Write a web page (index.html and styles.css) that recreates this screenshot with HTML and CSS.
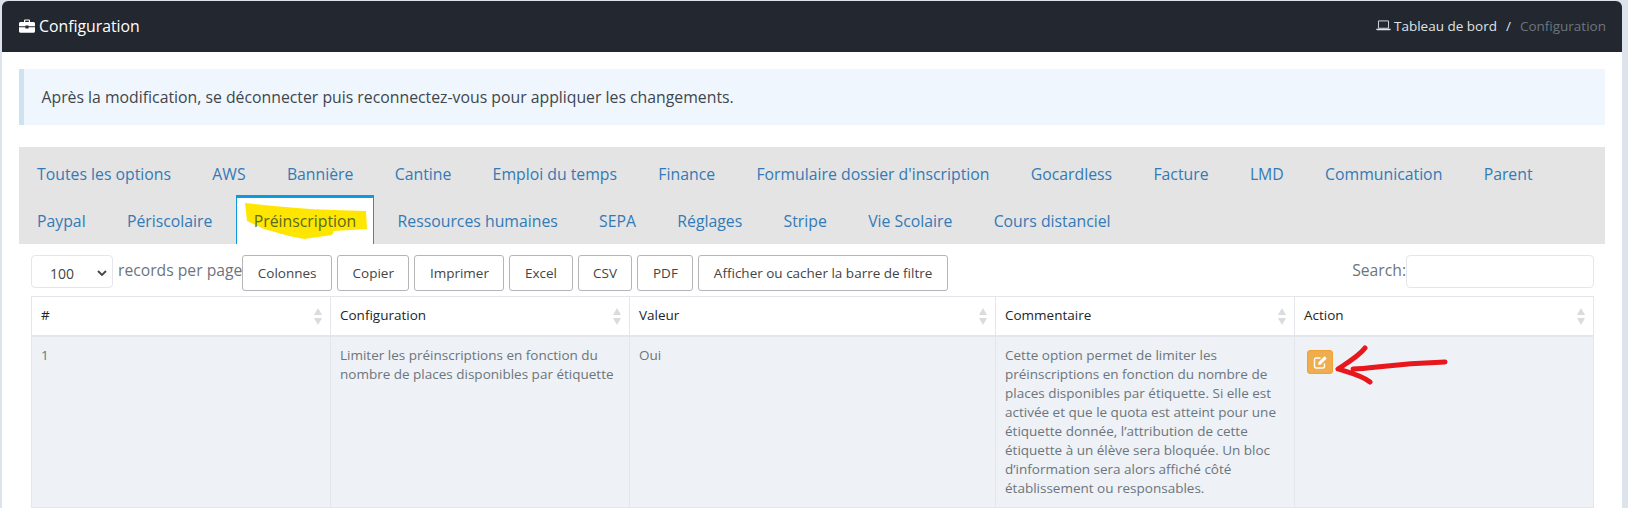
FILE: index.html
```html
<!DOCTYPE html>
<html lang="fr">
<head>
<meta charset="utf-8">
<title>Configuration</title>
<link rel="stylesheet" href="styles.css">
</head>
<body>
<div class="card">
  <header class="topbar">
    <h1 class="title">
      <svg class="ico-brief" viewBox="0 0 16 14"><path fill="#fff" d="M5 3V1.600C5 .9 5.600.4 6.200.4h3.600c.6 0 1.200.5 1.200 1.200V3h3.400c.9 0 1.600.7 1.600 1.500V7.300H9.600V6.600H6.400v.7H0V4.500C0 3.700.7 3 1.600 3H5zm1.200 0h3.600V1.600H6.200V3zM0 8.200h6.400v1.200h3.200V8.200H16v4c0 .9-.7 1.500-1.600 1.500H1.600C.7 13.700 0 13.100 0 12.200v-4z"/></svg>
      Configuration
    </h1>
    <nav class="crumbs">
      <svg class="ico-laptop" viewBox="0 0 16 12"><path fill="none" stroke="#dfe3e8" stroke-width="1" d="M2.500 1h11v8h-11z"/><path fill="#dfe3e8" d="M0 9.500h16v.8l-1 1H1l-1-1z"/></svg>
      <a class="crumb-link">Tableau de bord</a>
      <span class="crumb-sep">/</span>
      <span class="crumb-cur">Configuration</span>
    </nav>
  </header>
  <main class="content">
    <div class="alert">Après la modification, se déconnecter puis reconnectez-vous pour appliquer les changements.</div>
    <section class="panel">
      <div class="tabs">
        <ul class="tab-row tab-row-first">
          <li class="tab">Toutes les options</li>
          <li class="tab">AWS</li>
          <li class="tab">Bannière</li>
          <li class="tab">Cantine</li>
          <li class="tab">Emploi du temps</li>
          <li class="tab">Finance</li>
          <li class="tab">Formulaire dossier d'inscription</li>
          <li class="tab">Gocardless</li>
          <li class="tab">Facture</li>
          <li class="tab">LMD</li>
          <li class="tab">Communication</li>
          <li class="tab">Parent</li>
        </ul>
        <ul class="tab-row tab-row-second">
          <li class="tab">Paypal</li>
          <li class="tab">Périscolaire</li>
          <li class="tab tab-active">
            <svg class="marker" viewBox="0 0 124 36" preserveAspectRatio="none"><path fill="#ffe600" d="M1 0 C30 3 60 6 90 7 L122 8 L123 26 L90 28 L88 32 L60 36 L45 33 L20 26 L3 18 Z"/></svg>
            <span class="tab-label">Préinscription</span>
          </li>
          <li class="tab">Ressources humaines</li>
          <li class="tab">SEPA</li>
          <li class="tab">Réglages</li>
          <li class="tab">Stripe</li>
          <li class="tab">Vie Scolaire</li>
          <li class="tab">Cours distanciel</li>
        </ul>
      </div>
      <div class="tab-body">
        <div class="toolbar">
          <div class="select-box">100<svg class="chev" viewBox="0 0 10 6"><path fill="none" stroke="#444" stroke-width="1.800" d="M1 1l4 4 4-4"/></svg></div>
          <span class="per-page">records per page</span>
          <div class="btns">
            <button class="btn">Colonnes</button>
            <button class="btn">Copier</button>
            <button class="btn">Imprimer</button>
            <button class="btn">Excel</button>
            <button class="btn">CSV</button>
            <button class="btn">PDF</button>
            <button class="btn">Afficher ou cacher la barre de filtre</button>
          </div>
          <label class="search">Search:<span class="search-input"></span></label>
        </div>
        <table class="grid">
          <colgroup><col class="c1"><col class="c2"><col class="c3"><col class="c4"><col class="c5"></colgroup>
          <thead>
            <tr>
              <th>#<span class="sort"></span></th>
              <th>Configuration<span class="sort"></span></th>
              <th>Valeur<span class="sort"></span></th>
              <th>Commentaire<span class="sort"></span></th>
              <th>Action<span class="sort"></span></th>
            </tr>
          </thead>
          <tbody>
            <tr>
              <td>1</td>
              <td>Limiter les préinscriptions en fonction du nombre de places disponibles par étiquette</td>
              <td>Oui</td>
              <td>Cette option permet de limiter les préinscriptions en fonction du nombre de places disponibles par étiquette. Si elle est activée et que le quota est atteint pour une étiquette donnée, l’attribution de cette étiquette à un élève sera bloquée. Un bloc d’information sera alors affiché côté établissement ou responsables.</td>
              <td class="action-cell">
                <button class="edit"><svg viewBox="0 0 14 14"><path fill="none" stroke="#fff" stroke-width="1.400" d="M11 8.500V11.500a1.500 1.500 0 0 1-1.500 1.500H2.500A1.500 1.500 0 0 1 1 11.500V4.500A1.500 1.500 0 0 1 2.500 3H7"/><path fill="#fff" d="M4.800 7.500L11 1.300l2.200 2.200-6.200 6.200H4.800z"/></svg></button>
                <svg class="arrow" viewBox="0 0 115 40"><path fill="none" stroke="#e8171b" stroke-width="5" stroke-linecap="round" stroke-linejoin="round" d="M30 3C24 11 12 18 3 24C12 27 26 30 35 37M18 24C40 23 55 19 110 17"/></svg>
              </td>
            </tr>
          </tbody>
        </table>
      </div>
    </section>
  </main>
</div>
</body>
</html>
```
FILE: styles.css
```css
* { box-sizing: border-box; }
html, body { margin: 0; height: 508px; overflow: hidden; }
body { background: #dde3ea; font-family: "Open Sans", sans-serif; font-size: 14px; color: #6c757d; padding: 1px 6px 0 2px; }
.card { background: #fff; border-radius: 6px 6px 0 0; height: 507px; overflow: hidden; }
.topbar { height: 51px; background: #23272f; color: #fff; display: flex; align-items: center; justify-content: space-between; padding: 0 16px 2px 17px; }
.title { margin: 0; font-size: 15.800px; font-weight: 400; display: flex; align-items: center; gap: 4px; }
.ico-brief { width: 16px; height: 14px; }
.crumbs { font-size: 13.500px; display: flex; align-items: center; }
.ico-laptop { width: 15px; height: 11px; margin-right: 3px; }
.crumb-link { color: #dfe3e8; }
.crumb-sep { color: #dfe3e8; margin: 0 9px; }
.crumb-cur { color: #6c757d; }
.content { padding: 17px 17px 0; }
.alert { height: 56px; background: #eff6fd; border-left: 5px solid #cfe2f1; padding-left: 17.500px; display: flex; align-items: center; font-size: 15.800px; color: #3f464c; }
.panel { margin-top: 22px; }
.tabs { padding-top: 2px; background: #e4e4e4; height: 97px; }
.tab-row { list-style: none; margin: 0 0 0 -1px; padding: 0; display: flex; }
.tab-row-first { height: 46px; }
.tab-row-second { height: 49px; }
.tab { padding: 0 18px; margin-right: 3.300px; border: 1px solid transparent; border-top-width: 3px; border-bottom: 0; font-size: 15.800px; color: #337ab7; display: flex; align-items: center; white-space: nowrap; }
.tab-active { position: relative; padding: 0 17px; margin-left: 1px; margin-right: 4.300px; background: #fff; border-color: #0d9be0; color: #5a6a20; }
.tab-label { position: relative; }
.marker { position: absolute; left: 7px; top: 5px; width: 124px; height: 36px; }
.tab-body { padding: 11px 12px 0; }
.toolbar { display: flex; align-items: flex-start; height: 41px; }
.select-box { width: 82px; height: 33px; border: 1px solid #e3e6ea; border-radius: 4px; display: flex; align-items: center; justify-content: space-between; padding: 3px 5px 0 18px; color: #444; font-size: 14px; }
.chev { width: 10px; height: 6px; }
.per-page { margin-left: 5px; font-size: 15.700px; line-height: 30px; white-space: nowrap; }
.btns { display: flex; gap: 5px; }
.btn { height: 36px; padding: 0 14.500px; background: #fff; border: 1px solid #b5b5b5; border-radius: 3px; font: 13.500px "Open Sans", sans-serif; color: #444; white-space: nowrap; }
.search { margin-left: auto; margin-right: -1px; font-size: 15.700px; display: flex; align-items: flex-start; line-height: 30px; }
.search-input { width: 188px; height: 33px; border: 1px solid #e3e6ea; border-radius: 4px; }
.grid { width: 1562px; border-collapse: collapse; table-layout: fixed; font-size: 13.500px; }
.c1 { width: 299px; } .c2 { width: 299px; } .c3 { width: 366px; } .c4 { width: 299px; } .c5 { width: 299px; }
.grid th, .grid td { border: 1px solid #e3e6ea; }
.grid th { position: relative; height: 39px; border-bottom-width: 2px; padding: 0 9px 2px; text-align: left; font-weight: 400; color: #212529; }
.sort { position: absolute; right: 7px; top: 11px; width: 9px; height: 17px; }
.sort::before, .sort::after { content: ""; position: absolute; left: 0; border-left: 4.500px solid transparent; border-right: 4.500px solid transparent; }
.sort::before { top: 0; border-bottom: 7px solid #d9dbdd; }
.sort::after { bottom: 0; border-top: 7px solid #d9dbdd; }
.grid td { background: #eef1f5; vertical-align: top; padding: 9px; line-height: 19px; color: #6c757d; }
.action-cell { position: relative; }
.edit { position: absolute; left: 12px; top: 13px; width: 26px; height: 24px; padding: 0; background: #f0ad4e; border: 1px solid #eea236; border-radius: 3px; display: flex; align-items: center; justify-content: center; }
.edit svg { width: 15px; height: 14px; }
.arrow { position: absolute; left: 40px; top: 8px; width: 115px; height: 40px; }
```
